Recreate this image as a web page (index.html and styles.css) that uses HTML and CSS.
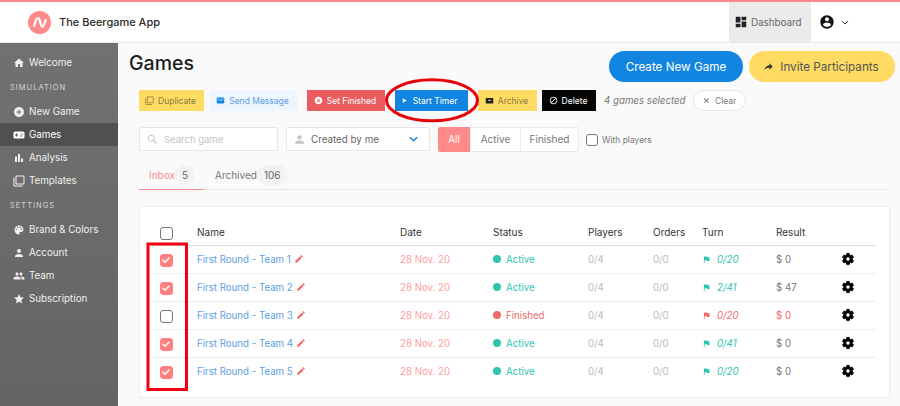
FILE: index.html
```html
<!DOCTYPE html>
<html lang="en">
<head>
<meta charset="utf-8">
<title>The Beergame App</title>
<link rel="stylesheet" href="styles.css">
</head>
<body>
<svg class="defs" width="0" height="0" aria-hidden="true">
<symbol id="i-home" viewBox="0 0 24 24"><path d="M10 20v-6h4v6h5v-8h3L12 3 2 12h3v8z"/></symbol>
<symbol id="i-add" viewBox="0 0 24 24"><path d="M12 2C6.48 2 2 6.48 2 12s4.48 10 10 10 10-4.48 10-10S17.52 2 12 2zm5 11h-4v4h-2v-4H7v-2h4V7h2v4h4v2z"/></symbol>
<symbol id="i-game" viewBox="0 0 24 24"><path fill-rule="evenodd" d="M4 5h16a3 3 0 0 1 3 3v8a3 3 0 0 1-3 3H4a3 3 0 0 1-3-3V8a3 3 0 0 1 3-3zm2 4v2H4v2h2v2h2v-2h2v-2H8V9zm10 3.500a1.500 1.500 0 1 0 0 3 1.500 1.500 0 0 0 0-3zm2-4a1.500 1.500 0 1 0 0 3 1.500 1.500 0 0 0 0-3z"/></symbol>
<symbol id="i-bars" viewBox="0 0 24 24"><path d="M4 9.200h4V20H4zM10 4h4v16h-4zm6 9h4v7h-4z"/></symbol>
<symbol id="i-copy" viewBox="0 0 24 24"><path d="M3 5H1v16c0 1.100.9 2 2 2h16v-2H3V5zm18-4H7c-1.100 0-2 .9-2 2v14c0 1.100.9 2 2 2h14c1.100 0 2-.9 2-2V3c0-1.100-.9-2-2-2zm0 16H7V3h14v14z"/></symbol>
<symbol id="i-palette" viewBox="0 0 24 24"><path d="M12 3c-4.970 0-9 4.030-9 9s4.030 9 9 9c.83 0 1.500-.67 1.500-1.500 0-.39-.15-.74-.39-1.010-.23-.26-.38-.61-.38-.99 0-.83.67-1.500 1.500-1.500H16c2.760 0 5-2.240 5-5 0-4.420-4.030-8-9-8zm-5.500 9c-.83 0-1.500-.67-1.500-1.500S5.670 9 6.500 9 8 9.670 8 10.500 7.330 12 6.500 12zm3-4C8.670 8 8 7.330 8 6.500S8.670 5 9.500 5s1.500.67 1.500 1.500S10.330 8 9.500 8zm5 0c-.83 0-1.500-.67-1.500-1.500S13.670 5 14.500 5s1.500.67 1.500 1.500S15.330 8 14.500 8zm3 4c-.83 0-1.500-.67-1.500-1.500S16.670 9 17.500 9s1.500.67 1.500 1.500-.67 1.500-1.500 1.500z"/></symbol>
<symbol id="i-person" viewBox="0 0 24 24"><path d="M12 12c2.210 0 4-1.790 4-4s-1.790-4-4-4-4 1.790-4 4 1.790 4 4 4zm0 2c-2.670 0-8 1.340-8 4v2h16v-2c0-2.660-5.330-4-8-4z"/></symbol>
<symbol id="i-group" viewBox="0 0 24 24"><path d="M16 11c1.660 0 2.990-1.340 2.990-3S17.660 5 16 5c-1.660 0-3 1.340-3 3s1.340 3 3 3zm-8 0c1.660 0 2.990-1.340 2.990-3S9.660 5 8 5C6.340 5 5 6.340 5 8s1.340 3 3 3zm0 2c-2.330 0-7 1.170-7 3.500V19h14v-2.500c0-2.330-4.670-3.500-7-3.500zm8 0c-.29 0-.62.02-.97.05 1.160.84 1.970 1.970 1.970 3.450V19h6v-2.500c0-2.330-4.670-3.500-7-3.500z"/></symbol>
<symbol id="i-star" viewBox="0 0 24 24"><path d="M12 17.270L18.180 21l-1.640-7.030L22 9.240l-7.190-.61L12 2 9.190 8.630 2 9.240l5.460 4.730L5.820 21z"/></symbol>
<symbol id="i-dash" viewBox="0 0 24 24"><path d="M3 13h8V3H3v10zm0 8h8v-6H3v6zm10 0h8V11h-8v10zm0-18v6h8V3h-8z"/></symbol>
<symbol id="i-mail" viewBox="0 0 24 24"><path d="M20 4H4c-1.100 0-1.990.9-1.990 2L2 18c0 1.100.9 2 2 2h16c1.100 0 2-.9 2-2V6c0-1.100-.9-2-2-2zm0 4l-8 5-8-5V6l8 5 8-5v2z"/></symbol>
<symbol id="i-cancel" viewBox="0 0 24 24"><path d="M12 2C6.470 2 2 6.470 2 12s4.470 10 10 10 10-4.470 10-10S17.530 2 12 2zm5 13.590L15.590 17 12 13.410 8.410 17 7 15.590 10.590 12 7 8.410 8.410 7 12 10.590 15.590 7 17 8.410 13.410 12 17 15.590z"/></symbol>
<symbol id="i-block" viewBox="0 0 24 24"><path d="M12 2C6.480 2 2 6.480 2 12s4.480 10 10 10 10-4.480 10-10S17.520 2 12 2zM4 12c0-4.420 3.580-8 8-8 1.850 0 3.550.63 4.900 1.690L5.690 16.900C4.630 15.550 4 13.850 4 12zm8 8c-1.850 0-3.550-.63-4.900-1.690L18.310 7.100C19.370 8.450 20 10.150 20 12c0 4.420-3.580 8-8 8z"/></symbol>
<symbol id="i-archive" viewBox="0 0 24 24"><path fill-rule="evenodd" d="M3 5h18a1 1 0 0 1 1 1v13a1 1 0 0 1-1 1H3a1 1 0 0 1-1-1V6a1 1 0 0 1 1-1zm6 5v3h6v-3z"/></symbol>
<symbol id="i-play" viewBox="0 0 24 24"><path d="M6 4l14 8-14 8z"/></symbol>
<symbol id="i-user" viewBox="0 0 24 24"><path d="M12 2C6.480 2 2 6.480 2 12s4.480 10 10 10 10-4.480 10-10S17.520 2 12 2zm0 3c1.660 0 3 1.340 3 3s-1.340 3-3 3-3-1.340-3-3 1.340-3 3-3zm0 14.200c-2.500 0-4.710-1.280-6-3.220.03-1.990 4-3.080 6-3.080 1.990 0 5.970 1.090 6 3.080-1.290 1.940-3.500 3.220-6 3.220z"/></symbol>
<symbol id="i-gear" viewBox="0 0 24 24"><path d="M19.140 12.940c.04-.3.06-.61.06-.94 0-.32-.02-.64-.07-.94l2.030-1.580c.18-.14.23-.41.12-.61l-1.920-3.320c-.12-.22-.37-.29-.59-.22l-2.390.96c-.5-.38-1.030-.7-1.620-.94l-.36-2.540c-.04-.24-.24-.41-.48-.41h-3.840c-.24 0-.43.17-.47.41l-.36 2.540c-.59.24-1.130.57-1.620.94l-2.390-.96c-.22-.08-.47 0-.59.22L2.740 8.870c-.12.21-.08.47.12.61l2.030 1.580c-.05.3-.09.63-.09.94s.02.64.07.94l-2.030 1.580c-.18.14-.23.41-.12.61l1.920 3.320c.12.22.37.29.59.22l2.390-.96c.5.38 1.030.7 1.620.94l.36 2.540c.05.24.24.41.48.41h3.840c.24 0 .44-.17.47-.41l.36-2.540c.59-.24 1.130-.56 1.620-.94l2.390.96c.22.08.47 0 .59-.22l1.920-3.320c.12-.22.07-.47-.12-.61l-2.010-1.580zM12 15.600c-1.980 0-3.600-1.620-3.600-3.600s1.620-3.600 3.600-3.600 3.600 1.620 3.600 3.600-1.620 3.600-3.600 3.600z"/></symbol>
<symbol id="i-flag" viewBox="0 0 24 24"><path d="M14.400 6L14 4H5v17h2v-7h5.600l.4 2h7V6z"/></symbol>
<symbol id="i-edit" viewBox="0 0 24 24"><path d="M3 17.250V21h3.750L17.810 9.940l-3.750-3.750L3 17.250zM20.710 7.040c.39-.39.39-1.020 0-1.410l-2.340-2.340c-.39-.39-1.020-.39-1.410 0l-1.830 1.830 3.750 3.750 1.830-1.830z"/></symbol>
<symbol id="i-share" viewBox="0 0 24 24"><path d="M14 9V5l7 7-7 7v-4.100c-5 0-8.500 1.600-11 5.100 1-5 4-10 11-11z"/></symbol>
<symbol id="i-search" viewBox="0 0 24 24"><path d="M15.500 14h-.79l-.28-.27C15.410 12.590 16 11.110 16 9.500 16 5.910 13.090 3 9.500 3S3 5.910 3 9.500 5.910 16 9.500 16c1.610 0 3.090-.59 4.230-1.570l.27.28v.79l5 4.990L20.490 19l-4.990-5zm-6 0C7.010 14 5 11.990 5 9.500S7.010 5 9.500 5 14 7.010 14 9.500 11.990 14 9.500 14z"/></symbol>
<symbol id="i-check" viewBox="0 0 24 24"><path d="M4.500 12.500l5 5L19.500 7" fill="none" stroke="#fff" stroke-width="3.600" stroke-linecap="round" stroke-linejoin="round"/></symbol>
</svg>

<header class="topbar">
  <div class="brand">
    <svg class="logo" viewBox="0 0 24 24"><circle cx="12" cy="12" r="12" fill="#ff8a8a"/><path d="M6.500 15.500C8 9 9 7.500 10.500 7.500c2.500 0 2.500 9 4.500 9 1.500 0 2-4.500 3.500-7" fill="none" stroke="#fff" stroke-width="2.300" stroke-linecap="round"/></svg>
    <span class="brand-name">The Beergame App</span>
  </div>
  <div class="top-actions">
    <div class="dash-tab"><svg class="ic ic-dash"><use href="#i-dash"/></svg>Dashboard</div>
    <div class="user-menu">
      <svg class="ic ic-user"><use href="#i-user"/></svg>
      <svg class="chev-sm" viewBox="0 0 10 6"><path d="M1 1l4 4 4-4" fill="none" stroke="#333" stroke-width="1.200"/></svg>
    </div>
  </div>
</header>

<div class="body-row">
  <nav class="sidebar">
    <a class="nav-item"><svg class="ic"><use href="#i-home"/></svg>Welcome</a>
    <div class="nav-label">SIMULATION</div>
    <a class="nav-item"><svg class="ic"><use href="#i-add"/></svg>New Game</a>
    <a class="nav-item is-active"><svg class="ic"><use href="#i-game"/></svg>Games</a>
    <a class="nav-item"><svg class="ic"><use href="#i-bars"/></svg>Analysis</a>
    <a class="nav-item"><svg class="ic"><use href="#i-copy"/></svg>Templates</a>
    <div class="nav-label">SETTINGS</div>
    <a class="nav-item"><svg class="ic"><use href="#i-palette"/></svg>Brand &amp; Colors</a>
    <a class="nav-item"><svg class="ic"><use href="#i-person"/></svg>Account</a>
    <a class="nav-item"><svg class="ic"><use href="#i-group"/></svg>Team</a>
    <a class="nav-item"><svg class="ic"><use href="#i-star"/></svg>Subscription</a>
  </nav>

  <main class="content">
    <div class="title-row">
      <h1>Games</h1>
      <div class="cta-group">
        <a class="cta cta-blue">Create New Game</a>
        <a class="cta cta-yellow"><svg class="ic ic-share"><use href="#i-share"/></svg>Invite Participants</a>
      </div>
    </div>

    <div class="inner">
      <div class="bulk-row">
        <a class="btn btn-yellow btn-dup"><svg class="ic"><use href="#i-copy"/></svg>Duplicate</a>
        <a class="btn btn-light btn-msg"><svg class="ic"><use href="#i-mail"/></svg>Send Message</a>
        <a class="btn btn-red btn-fin"><svg class="ic"><use href="#i-cancel"/></svg>Set Finished</a>
        <a class="btn btn-blue btn-timer"><svg class="ic ic-play"><use href="#i-play"/></svg>Start Timer</a>
        <a class="btn btn-yellow btn-arch"><svg class="ic ic-dark"><use href="#i-archive"/></svg>Archive</a>
        <a class="btn btn-black btn-del"><svg class="ic"><use href="#i-block"/></svg>Delete</a>
        <span class="sel-text">4 games selected</span>
        <a class="btn-clear"><span class="x">×</span>Clear</a>
      </div>

      <div class="filter-row">
        <div class="field search"><svg class="ic"><use href="#i-search"/></svg>Search game</div>
        <div class="field select"><svg class="ic"><use href="#i-person"/></svg><span class="select-val">Created by me</span>
          <svg class="chev" viewBox="0 0 10 6"><path d="M1 1l4 4 4-4" fill="none" stroke="#1185e0" stroke-width="1.600"/></svg></div>
        <div class="segment"><span class="seg seg-on">All</span><span class="seg">Active</span><span class="seg">Finished</span></div>
        <label class="with-players"><span class="box"></span>With players</label>
      </div>

      <div class="tabs">
        <div class="tab tab-on">Inbox<span class="count">5</span></div>
        <div class="tab">Archived<span class="count">106</span></div>
      </div>

      <section class="card">
        <table class="games">
          <colgroup><col class="c-check"><col class="c-name"><col class="c-date"><col class="c-status"><col class="c-players"><col class="c-orders"><col class="c-turn"><col class="c-result"><col class="c-gear"></colgroup>
          <thead>
            <tr><th><span class="box"></span></th><th>Name</th><th>Date</th><th>Status</th><th>Players</th><th>Orders</th><th>Turn</th><th>Result</th><th></th></tr>
          </thead>
          <tbody>
            <tr>
              <td><span class="box box-on"><svg><use href="#i-check"/></svg></span></td>
              <td><a class="game-link">First Round - Team 1</a><svg class="ic ic-edit"><use href="#i-edit"/></svg></td>
              <td class="date">28 Nov. 20</td>
              <td class="st-active"><i class="dot"></i>Active</td>
              <td class="muted">0/4</td><td class="muted">0/0</td>
              <td class="turn st-active"><svg class="ic ic-flag"><use href="#i-flag"/></svg><em>0/20</em></td>
              <td class="money">$ 0</td>
              <td><svg class="ic ic-gear"><use href="#i-gear"/></svg></td>
            </tr>
            <tr>
              <td><span class="box box-on"><svg><use href="#i-check"/></svg></span></td>
              <td><a class="game-link">First Round - Team 2</a><svg class="ic ic-edit"><use href="#i-edit"/></svg></td>
              <td class="date">28 Nov. 20</td>
              <td class="st-active"><i class="dot"></i>Active</td>
              <td class="muted">0/4</td><td class="muted">0/0</td>
              <td class="turn st-active"><svg class="ic ic-flag"><use href="#i-flag"/></svg><em>2/41</em></td>
              <td class="money">$ 47</td>
              <td><svg class="ic ic-gear"><use href="#i-gear"/></svg></td>
            </tr>
            <tr>
              <td><span class="box"></span></td>
              <td><a class="game-link">First Round - Team 3</a><svg class="ic ic-edit"><use href="#i-edit"/></svg></td>
              <td class="date">28 Nov. 20</td>
              <td class="st-finished"><i class="dot"></i>Finished</td>
              <td class="muted">0/4</td><td class="muted">0/0</td>
              <td class="turn st-finished"><svg class="ic ic-flag"><use href="#i-flag"/></svg><em>0/20</em></td>
              <td class="money st-finished">$ 0</td>
              <td><svg class="ic ic-gear"><use href="#i-gear"/></svg></td>
            </tr>
            <tr>
              <td><span class="box box-on"><svg><use href="#i-check"/></svg></span></td>
              <td><a class="game-link">First Round - Team 4</a><svg class="ic ic-edit"><use href="#i-edit"/></svg></td>
              <td class="date">28 Nov. 20</td>
              <td class="st-active"><i class="dot"></i>Active</td>
              <td class="muted">0/4</td><td class="muted">0/0</td>
              <td class="turn st-active"><svg class="ic ic-flag"><use href="#i-flag"/></svg><em>0/41</em></td>
              <td class="money">$ 0</td>
              <td><svg class="ic ic-gear"><use href="#i-gear"/></svg></td>
            </tr>
            <tr>
              <td><span class="box box-on"><svg><use href="#i-check"/></svg></span></td>
              <td><a class="game-link">First Round - Team 5</a><svg class="ic ic-edit"><use href="#i-edit"/></svg></td>
              <td class="date">28 Nov. 20</td>
              <td class="st-active"><i class="dot"></i>Active</td>
              <td class="muted">0/4</td><td class="muted">0/0</td>
              <td class="turn st-active"><svg class="ic ic-flag"><use href="#i-flag"/></svg><em>0/20</em></td>
              <td class="money">$ 0</td>
              <td><svg class="ic ic-gear"><use href="#i-gear"/></svg></td>
            </tr>
          </tbody>
        </table>
      </section>
    </div>
  </main>
</div>

<svg class="annotations" width="900" height="406" viewBox="0 0 900 406" aria-hidden="true">
  <ellipse cx="432" cy="100.300" rx="45.500" ry="20.500" fill="none" stroke="#e8000b" stroke-width="3"/>
  <rect x="148" y="244" width="38.500" height="145.500" fill="none" stroke="#f00010" stroke-width="3"/>
</svg>
</body>
</html>
```

FILE: styles.css
```css
* { box-sizing: border-box; }
html, body { margin: 0; height: 100%; }
body {
  position: relative;
  width: 900px;
  height: 406px;
  overflow: hidden;
  font-family: Inter, "Liberation Sans", sans-serif;
  background: #fafafa;
  color: #333;
}
.defs { position: absolute; }
.ic { width: 12px; height: 12px; fill: currentColor; flex: none; display: block; }

/* top bar */
.topbar {
  height: 43px;
  display: flex;
  justify-content: space-between;
  background: #fff;
  border-top: 2px solid #ff8a8a;
  border-bottom: 1px solid #e9e9e9;
}
.brand { display: flex; align-items: center; padding-left: 28px; gap: 8px; }
.logo { width: 23px; height: 23px; }
.brand-name { font-size: 11px; font-weight: 500; color: #2a2a2a; }
.top-actions { display: flex; }
.dash-tab {
  width: 82px;
  display: flex;
  align-items: center;
  padding-left: 5px;
  gap: 3px;
  font-size: 9.800px;
  color: #666;
  background: #ebebeb;
}
.ic-dash { color: #222; width: 14px; height: 14px; }
.user-menu { width: 89px; display: flex; align-items: center; padding-left: 8px; gap: 6px; }
.ic-user { width: 16px; height: 16px; color: #111; }
.chev-sm { width: 8px; height: 5px; }

/* layout */
.body-row { display: flex; height: 363px; }
.sidebar {
  width: 118px;
  flex: none;
  padding-top: 8px;
  background: linear-gradient(#717171, #646464);
  color: #f0f0f0;
}
.nav-item {
  height: 23px;
  display: flex;
  align-items: center;
  gap: 4px;
  padding-left: 13px;
  font-size: 9.800px;
}
.nav-item .ic { width: 12px; height: 12px; }
.nav-item.is-active { background: #505050; color: #fff; }
.nav-label {
  height: 26px;
  padding: 8px 0 0 10px;
  font-size: 7.500px;
  letter-spacing: 1px;
  color: #d5d5d5;
  line-height: 12px;
}
.content { flex: 1; min-width: 0; }

.title-row { display: flex; justify-content: space-between; padding: 6px 5px 0 11px; height: 47px; }
h1 { margin: 0; font-size: 19.500px; font-weight: 500; line-height: 28px; color: #1c1c1c; }
.cta-group { display: flex; gap: 6px; margin-top: 2px; }
.cta {
  height: 31px;
  border-radius: 16px;
  display: flex;
  align-items: center;
  justify-content: center;
  font-size: 11.700px;
}
.cta-blue { width: 134px; background: #1185e0; color: #fff; }
.cta-yellow { width: 146px; background: #ffdb63; color: #555; gap: 6px; padding-right: 2px; }
.ic-share { color: #333; width: 11px; height: 11px; }

.inner { padding: 0 10px 0 21px; }

/* bulk actions */
.bulk-row { display: flex; align-items: center; height: 21px; font-size: 8.500px; }
.btn { height: 21px; display: flex; align-items: center; justify-content: center; gap: 4px; padding-right: 2px; }
.btn .ic { width: 9px; height: 9px; }
.btn-yellow { background: #ffdb63; color: #8a7a3c; }
.btn-light { background: #edf6fe; color: #5d9ee6; }
.btn-red { background: #eb5c5f; color: #fff; }
.btn-blue { background: #1185e0; color: #fff; }
.btn-black { background: #050505; color: #fff; }
.btn-dup { width: 65px; }
.btn-msg { width: 87px; margin-left: 6px; }
.btn-msg .ic { color: #1185e0; }
.btn-fin { width: 78px; margin-left: 10px; }
.btn-timer { width: 73px; margin-left: 10px; padding-right: 6px; }
.ic-play { transform: scale(.75); }
.btn-arch { width: 59px; margin-left: 10px; }
.ic-dark { color: #222; }
.btn-del { width: 54px; margin-left: 5px; }
.sel-text { margin-left: 8px; width: 81px; font-style: italic; font-size: 9.700px; color: #777; white-space: nowrap; }
.btn-clear {
  margin-left: 8px;
  width: 53px;
  height: 21px;
  border: 1px solid #e6e6e6;
  border-radius: 11px;
  background: #fff;
  color: #777;
  display: flex;
  align-items: center;
  justify-content: center;
  gap: 5px;
  font-size: 8.500px;
}
.x { font-size: 11px; line-height: 1; }

/* filters */
.filter-row { display: flex; align-items: center; margin-top: 16px; height: 24px; font-size: 10px; }
.field {
  height: 24px;
  display: flex;
  align-items: center;
  background: #fff;
  border: 1px solid #e6e6e6;
  border-radius: 2px;
}
.search { width: 139px; padding-left: 6px; gap: 5px; color: #c5c5c5; font-size: 9.500px; }
.search .ic { width: 13px; height: 13px; color: #c9c9c9; }
.select { width: 144px; margin-left: 8px; padding: 0 11px 0 6px; gap: 5px; color: #666; font-size: 9.800px; }
.select .ic { color: #c4c4c4; width: 13px; height: 13px; }
.select-val { flex: 1; }
.chev { width: 9px; height: 6px; }
.segment { display: flex; margin-left: 8px; height: 25px; background: #fff; border: 1px solid #e9e9e9; border-radius: 2px; }
.seg { display: flex; align-items: center; justify-content: center; width: 50px; color: #777; border-left: 1px solid #ececec; }
.seg:last-child { width: 58px; }
.seg-on { width: 32px; border: 0; background: #ff8a8a; color: #fff; margin: -1px 0 -1px -1px; border-radius: 2px 0 0 2px; }
.with-players { display: flex; align-items: center; gap: 4px; margin-left: 7px; padding-top: 2px; font-size: 8.500px; color: #777; }
.with-players .box { width: 12px; height: 12px; }

.box {
  width: 13px;
  height: 13px;
  display: inline-block;
  vertical-align: middle;
  background: #fff;
  border: 1.500px solid #777;
  border-radius: 3px;
}
.box-on { background: #ff8080; border-color: #ff8080; }
.box-on svg { display: block; width: 10px; height: 10px; }

/* tabs */
.tabs { display: flex; height: 28px; margin-top: 11px; border-bottom: 1px solid #e8e8e8; font-size: 10px; }
.tab { width: 65px; display: flex; align-items: center; padding: 0 0 2px 10px; color: #777; }
.tab + .tab { width: auto; padding-left: 11px; }
.tab-on { color: #ff8a8a; border-bottom: 1px solid #ff8a8a; margin-bottom: -1px; }
.count {
  min-width: 20px;
  height: 20px;
  padding: 0 7px;
  display: flex;
  align-items: center;
  justify-content: center;
  border-radius: 10px;
  background: #f3f3f3;
  color: #666;
}

/* table card */
.card {
  margin-top: 16px;
  height: 192px;
  padding: 12px 13px 0 12px;
  background: #fff;
  border: 1px solid #efefef;
  border-radius: 2px;
  box-shadow: 0 1px 2px rgba(0,0,0,.04);
}
.games { width: 100%; table-layout: fixed; border-collapse: collapse; font-size: 10px; }
.c-check { width: 45px; }
.c-name { width: 203px; }
.c-date { width: 93px; }
.c-status { width: 95px; }
.c-players { width: 65px; }
.c-orders { width: 49px; }
.c-turn { width: 74px; }
.c-result { width: 62px; }
.games th { height: 26px; padding: 0; text-align: left; font-weight: 400; color: #333; border-bottom: 1px solid #dcdcdc; }
.games th:first-child, .games td:first-child { text-align: center; padding: 2px 17px 0 0; }
.games td { height: 28px; padding: 0; font-size: 9.700px; color: #777; border-bottom: 1px solid #ececec; white-space: nowrap; }
.games tbody tr:last-child td { border-bottom: 0; }
.game-link { color: #5d9ee6; }
.ic-edit { display: inline-block; vertical-align: -1px; width: 10px; height: 10px; margin-left: 3px; color: #f06a6a; }
.date { color: #ffa0a0 !important; }
.muted { color: #bbb !important; }
.dot { display: inline-block; width: 8px; height: 8px; border-radius: 50%; background: currentColor; margin-right: 5px; vertical-align: -0.5px; }
.games .st-active { color: #2fc6ae; }
.games .st-finished { color: #f06a6a; }
.ic-flag { display: inline-block; width: 9px; height: 9px; margin-right: 6px; vertical-align: -1px; }
.turn em { font-style: italic; }
.ic-gear { width: 14px; height: 14px; color: #000; stroke: #000; stroke-width: 1.500px; margin-left: 3px; }

/* hand-drawn annotations over the screenshot */
.annotations { position: absolute; left: 0; top: 0; pointer-events: none; }
```
